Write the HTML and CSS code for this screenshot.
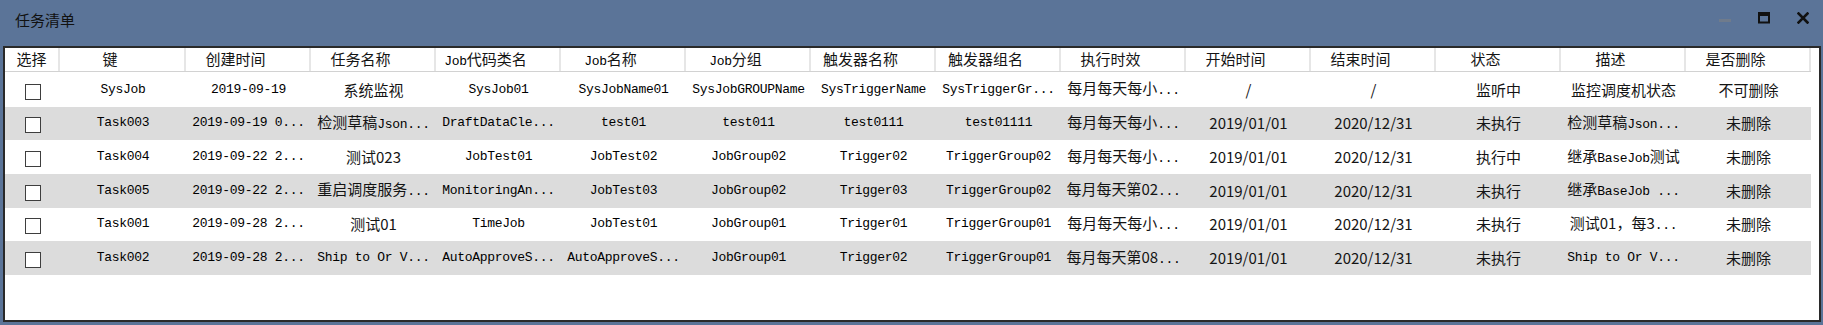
FILE: index.html
```html
<!DOCTYPE html>
<html lang="zh-CN">
<head>
<meta charset="utf-8">
<title>任务清单</title>
<link rel="stylesheet" href="styles.css">
</head>
<body>
<div class="window">
  <div class="titlebar">
    <span class="title">任务清单</span>
    <div class="controls">
      <svg class="btn" width="12" height="12" viewBox="0 0 12 12"><rect x="0" y="7" width="12" height="3" fill="#6f7b8c"/></svg>
      <svg class="btn" width="12" height="12" viewBox="0 0 12 12"><rect x="1" y="1.5" width="10" height="9" fill="none" stroke="#111" stroke-width="2"/><rect x="0" y="0" width="12" height="4" fill="#111"/></svg>
      <svg class="btn" width="12" height="12" viewBox="0 0 12 12"><path d="M1.5 1.5 L10.5 10.5 M10.5 1.5 L1.5 10.5" stroke="#111" stroke-width="2.6" stroke-linecap="square"/></svg>
    </div>
  </div>
  <div class="panel">
    <div class="row head">
      <div class="c first">选择</div>
      <div class="c">键</div>
      <div class="c">创建时间</div>
      <div class="c">任务名称</div>
      <div class="c"><span class="m">Job</span>代码类名</div>
      <div class="c"><span class="m">Job</span>名称</div>
      <div class="c"><span class="m">Job</span>分组</div>
      <div class="c">触发器名称</div>
      <div class="c">触发器组名</div>
      <div class="c">执行时效</div>
      <div class="c">开始时间</div>
      <div class="c">结束时间</div>
      <div class="c">状态</div>
      <div class="c">描述</div>
      <div class="c">是否删除</div>
    </div>

    <div class="row">
      <div class="c"><span class="cb"></span></div>
      <div class="c m">SysJob</div>
      <div class="c m">2019-09-19</div>
      <div class="c">系统监视</div>
      <div class="c m">SysJob01</div>
      <div class="c m">SysJobName01</div>
      <div class="c m">SysJobGROUPName</div>
      <div class="c m">SysTriggerName</div>
      <div class="c m">SysTriggerGr...</div>
      <div class="c">每月每天每小<span class="m">...</span></div>
      <div class="c">/</div>
      <div class="c">/</div>
      <div class="c">监听中</div>
      <div class="c">监控调度机状态</div>
      <div class="c">不可删除</div>
    </div>

    <div class="row alt">
      <div class="c"><span class="cb"></span></div>
      <div class="c m">Task003</div>
      <div class="c m">2019-09-19 0...</div>
      <div class="c">检测草稿<span class="m">Json...</span></div>
      <div class="c m">DraftDataCle...</div>
      <div class="c m">test01</div>
      <div class="c m">test011</div>
      <div class="c m">test0111</div>
      <div class="c m">test01111</div>
      <div class="c">每月每天每小<span class="m">...</span></div>
      <div class="c">2019/01/01</div>
      <div class="c">2020/12/31</div>
      <div class="c">未执行</div>
      <div class="c">检测草稿<span class="m">Json...</span></div>
      <div class="c">未删除</div>
    </div>

    <div class="row">
      <div class="c"><span class="cb"></span></div>
      <div class="c m">Task004</div>
      <div class="c m">2019-09-22 2...</div>
      <div class="c">测试023</div>
      <div class="c m">JobTest01</div>
      <div class="c m">JobTest02</div>
      <div class="c m">JobGroup02</div>
      <div class="c m">Trigger02</div>
      <div class="c m">TriggerGroup02</div>
      <div class="c">每月每天每小<span class="m">...</span></div>
      <div class="c">2019/01/01</div>
      <div class="c">2020/12/31</div>
      <div class="c">执行中</div>
      <div class="c">继承<span class="m">BaseJob</span>测试</div>
      <div class="c">未删除</div>
    </div>

    <div class="row alt">
      <div class="c"><span class="cb"></span></div>
      <div class="c m">Task005</div>
      <div class="c m">2019-09-22 2...</div>
      <div class="c">重启调度服务<span class="m">...</span></div>
      <div class="c m">MonitoringAn...</div>
      <div class="c m">JobTest03</div>
      <div class="c m">JobGroup02</div>
      <div class="c m">Trigger03</div>
      <div class="c m">TriggerGroup02</div>
      <div class="c">每月每天第02<span class="m">...</span></div>
      <div class="c">2019/01/01</div>
      <div class="c">2020/12/31</div>
      <div class="c">未执行</div>
      <div class="c">继承<span class="m">BaseJob ...</span></div>
      <div class="c">未删除</div>
    </div>

    <div class="row">
      <div class="c"><span class="cb"></span></div>
      <div class="c m">Task001</div>
      <div class="c m">2019-09-28 2...</div>
      <div class="c">测试01</div>
      <div class="c m">TimeJob</div>
      <div class="c m">JobTest01</div>
      <div class="c m">JobGroup01</div>
      <div class="c m">Trigger01</div>
      <div class="c m">TriggerGroup01</div>
      <div class="c">每月每天每小<span class="m">...</span></div>
      <div class="c">2019/01/01</div>
      <div class="c">2020/12/31</div>
      <div class="c">未执行</div>
      <div class="c">测试01，每3<span class="m">...</span></div>
      <div class="c">未删除</div>
    </div>

    <div class="row alt">
      <div class="c"><span class="cb"></span></div>
      <div class="c m">Task002</div>
      <div class="c m">2019-09-28 2...</div>
      <div class="c m">Ship to Or V...</div>
      <div class="c m">AutoApproveS...</div>
      <div class="c m">AutoApproveS...</div>
      <div class="c m">JobGroup01</div>
      <div class="c m">Trigger02</div>
      <div class="c m">TriggerGroup01</div>
      <div class="c">每月每天第08<span class="m">...</span></div>
      <div class="c">2019/01/01</div>
      <div class="c">2020/12/31</div>
      <div class="c">未执行</div>
      <div class="c m">Ship to Or V...</div>
      <div class="c">未删除</div>
    </div>
  </div>
</div>
</body>
</html>
```

FILE: styles.css
```css
html, body {
  margin: 0;
  padding: 0;
}
body {
  width: 1823px;
  height: 325px;
  background: #5b7498;
  font-family: "Noto Sans CJK SC", "Liberation Sans", sans-serif;
  color: #141414;
  overflow: hidden;
}
.window {
  display: flex;
  flex-direction: column;
  height: 325px;
}
.titlebar {
  height: 46px;
  display: flex;
  align-items: center;
  padding: 0 14px 0 15px;
  box-sizing: border-box;
  flex: none;
}
.title {
  font-size: 15px;
  line-height: 20px;
  color: #111;
  margin-top: -6px;
}
.controls {
  margin-left: auto;
  display: flex;
  align-items: center;
  gap: 27px;
  margin-top: -10px;
}
.btn {
  display: block;
}
.panel {
  flex: 1;
  margin: 0 2px 3px 3px;
  border: 2px solid #2a2a2a;
  background: #fff;
  box-sizing: border-box;
  overflow: hidden;
}
.row {
  display: grid;
  grid-template-columns: 55px 126px repeat(13, 125px);
  width: 1806px;
  height: 33.67px;
  align-items: center;
}
.row.alt {
  background: #dcdcdc;
}
.row.head {
  height: 23px;
  border-bottom: 1px solid #d2d2d2;
  margin-bottom: 1px;
  align-items: stretch;
}
.c {
  font-size: 15px;
  line-height: 20px;
  text-align: center;
  white-space: nowrap;
  overflow: hidden;
}
.head .c {
  line-height: 22px;
  padding-right: 24px;
  border-right: 2px solid #e6e6e6;
  box-sizing: border-box;
}
.head .c.first {
  padding-right: 0;
}
.m {
  font-family: "Liberation Mono", monospace;
  font-size: 13px;
  letter-spacing: -0.3px;
  color: #000;
}
.cb {
  display: inline-block;
  width: 14px;
  height: 14px;
  border: 1px solid #3e3e3e;
  background: #fff;
  vertical-align: middle;
  margin-left: 1px;
}
```
